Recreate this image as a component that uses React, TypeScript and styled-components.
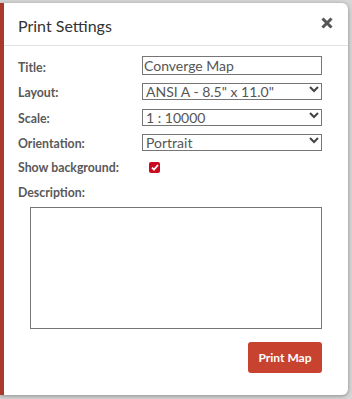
import * as React from 'react';
import styled, { createGlobalStyle } from 'styled-components';

const GlobalStyle = createGlobalStyle`
  html, body {
    margin: 0;
    padding: 0;
    background: #d6d6d6;
    font-family: Lato, "Liberation Sans", sans-serif;
  }
`;

const Page = styled.div`
  width: 352px;
  height: 399px;
  padding-top: 3px;
  box-sizing: border-box;
`;

const Modal = styled.div`
  width: 348px;
  height: 392px;
  box-sizing: border-box;
  background: #fff;
  border-left: 4px solid #a8392b;
  border-radius: 0 6px 6px 0;
  box-shadow: 0 1px 4px rgba(0, 0, 0, 0.35);
  display: flex;
  flex-direction: column;
`;

const Header = styled.div`
  height: 43px;
  box-sizing: border-box;
  border-bottom: 1px solid #e2e2e2;
  display: flex;
  align-items: center;
  justify-content: space-between;
  padding: 0 14px 0 14px;
`;

const Title = styled.h4`
  margin: 0;
  font-size: 16px;
  font-weight: 400;
  color: #333;
  padding-top: 2px;
`;

const CloseButton = styled.button`
  border: none;
  background: none;
  padding: 0;
  width: 14px;
  height: 14px;
  display: flex;
  align-items: center;
  justify-content: center;
  cursor: pointer;
  margin-top: -3px;
`;

const Form = styled.div`
  padding: 10px 26px 0 14px;
  display: flex;
  flex-direction: column;
`;

const Row = styled.div<{ $h?: number }>`
  display: flex;
  height: ${(p) => p.$h ?? 25.3}px;
  align-items: flex-start;
`;

const Label = styled.label<{ $lh?: number }>`
  width: 124px;
  flex-shrink: 0;
  font-size: 12.3px;
  font-weight: 700;
  color: #595959;
  line-height: ${(p) => p.$lh ?? 24}px;
`;

const TextInput = styled.input`
  width: 180px;
  height: 19px;
  box-sizing: border-box;
  border: 1px solid #767676;
  padding: 0 1px;
  font-family: inherit;
  font-size: 14px;
  color: #555;
  outline: none;
`;

const SelectWrap = styled.div`
  position: relative;
  width: 180px;
  height: 17px;
`;

const Select = styled.select`
  width: 100%;
  height: 17px;
  box-sizing: border-box;
  border: 1px solid #767676;
  border-radius: 0;
  background: #fff;
  appearance: none;
  padding: 0 3px;
  font-family: inherit;
  font-size: 14px;
  line-height: 15px;
  color: #555;
  outline: none;
`;

const Chevron = styled.svg`
  position: absolute;
  right: 3px;
  top: 4px;
  pointer-events: none;
`;

const CheckBox = styled.span`
  margin-top: 5px;
  margin-left: 7px;
  width: 11px;
  height: 11px;
  border-radius: 2px;
  background: #cc0a1f;
  display: flex;
  align-items: center;
  justify-content: center;
`;

const TextArea = styled.textarea`
  margin-left: 12px;
  width: 292px;
  height: 122px;
  box-sizing: border-box;
  border: 1px solid #767676;
  resize: none;
  font-family: inherit;
  outline: none;
`;

const Footer = styled.div`
  display: flex;
  justify-content: flex-end;
  padding: 13px 26px 0 0;
`;

const PrintButton = styled.button`
  width: 74px;
  height: 31px;
  border: none;
  border-radius: 3px;
  background: #c8432f;
  color: #fff;
  font-family: inherit;
  font-size: 12px;
  font-weight: 700;
  cursor: pointer;
`;

const SelectField = ({ value, options }: { value: string; options: string[] }) => (
  <SelectWrap>
    <Select defaultValue={value}>
      {options.map((o) => (
        <option key={o}>{o}</option>
      ))}
    </Select>
    <Chevron width="10" height="8" viewBox="0 0 10 8">
      <path d="M1 2 L5 6 L9 2" fill="none" stroke="#444" strokeWidth="2" />
    </Chevron>
  </SelectWrap>
);

const App = () => {
  return (
    <Page>
      <GlobalStyle />
      <Modal>
        <Header>
          <Title>Print Settings</Title>
          <CloseButton aria-label="Close">
            <svg width="12" height="12" viewBox="0 0 12 12">
              <path d="M1.5 1.5 L10.5 10.5 M10.5 1.5 L1.5 10.5" stroke="#555" strokeWidth="3" />
            </svg>
          </CloseButton>
        </Header>
        <Form>
          <Row>
            <Label>Title:</Label>
            <TextInput defaultValue="Converge Map" />
          </Row>
          <Row>
            <Label>Layout:</Label>
            <SelectField value={'ANSI A - 8.5" x 11.0"'} options={['ANSI A - 8.5" x 11.0"', 'ANSI B - 11.0" x 17.0"']} />
          </Row>
          <Row>
            <Label>Scale:</Label>
            <SelectField value="1 : 10000" options={['1 : 5000', '1 : 10000', '1 : 25000']} />
          </Row>
          <Row>
            <Label>Orientation:</Label>
            <SelectField value="Portrait" options={['Portrait', 'Landscape']} />
          </Row>
          <Row>
            <Label $lh={22}>Show background:</Label>
            <CheckBox>
              <svg width="8" height="7" viewBox="0 0 8 7">
                <path d="M1 3.6 L3 5.6 L7 1" fill="none" stroke="#fff" strokeWidth="1.8" />
              </svg>
            </CheckBox>
          </Row>
          <Row $h={24.5}>
            <Label $lh={21}>Description:</Label>
          </Row>
          <TextArea />
        </Form>
        <Footer>
          <PrintButton>Print Map</PrintButton>
        </Footer>
      </Modal>
    </Page>
  );
};

export default App;
